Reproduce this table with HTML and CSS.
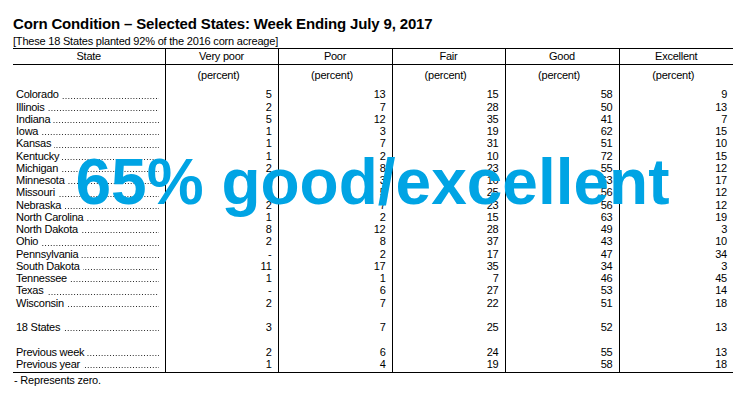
FILE: index.html
```html
<!DOCTYPE html>
<html lang="en">
<head>
<meta charset="utf-8">
<title>Corn Condition – Selected States</title>
<link rel="stylesheet" href="styles.css">
</head>
<body>
<div class="page">
  <h1 class="title">Corn Condition – Selected States: Week Ending July 9, 2017</h1>
  <p class="subtitle">[These 18 States planted 92% of the 2016 corn acreage]</p>
  <table class="cond">
    <colgroup>
      <col class="c-state"><col class="c-num"><col class="c-num2"><col class="c-num"><col class="c-num2"><col class="c-num2">
    </colgroup>
    <thead>
      <tr><th>State</th><th>Very poor</th><th>Poor</th><th>Fair</th><th>Good</th><th>Excellent</th></tr>
    </thead>
    <tbody>
      <tr class="unit"><td></td><td>(percent)</td><td>(percent)</td><td>(percent)</td><td>(percent)</td><td>(percent)</td></tr>
      <tr class="gap"><td></td><td></td><td></td><td></td><td></td><td></td></tr>
      <tr><td><div class="st"><span>Colorado</span><i class="dots"></i></div></td><td>5</td><td>13</td><td>15</td><td>58</td><td>9</td></tr>
      <tr><td><div class="st"><span>Illinois</span><i class="dots"></i></div></td><td>2</td><td>7</td><td>28</td><td>50</td><td>13</td></tr>
      <tr><td><div class="st"><span>Indiana</span><i class="dots"></i></div></td><td>5</td><td>12</td><td>35</td><td>41</td><td>7</td></tr>
      <tr><td><div class="st"><span>Iowa</span><i class="dots"></i></div></td><td>1</td><td>3</td><td>19</td><td>62</td><td>15</td></tr>
      <tr><td><div class="st"><span>Kansas</span><i class="dots"></i></div></td><td>1</td><td>7</td><td>31</td><td>51</td><td>10</td></tr>
      <tr><td><div class="st"><span>Kentucky</span><i class="dots"></i></div></td><td>1</td><td>2</td><td>10</td><td>72</td><td>15</td></tr>
      <tr><td><div class="st"><span>Michigan</span><i class="dots"></i></div></td><td>2</td><td>8</td><td>23</td><td>55</td><td>12</td></tr>
      <tr><td><div class="st"><span>Minnesota</span><i class="dots"></i></div></td><td>1</td><td>3</td><td>16</td><td>63</td><td>17</td></tr>
      <tr><td><div class="st"><span>Missouri</span><i class="dots"></i></div></td><td>2</td><td>5</td><td>25</td><td>56</td><td>12</td></tr>
      <tr><td><div class="st"><span>Nebraska</span><i class="dots"></i></div></td><td>2</td><td>7</td><td>23</td><td>56</td><td>12</td></tr>
      <tr><td><div class="st"><span>North Carolina</span><i class="dots"></i></div></td><td>1</td><td>2</td><td>15</td><td>63</td><td>19</td></tr>
      <tr><td><div class="st"><span>North Dakota</span><i class="dots"></i></div></td><td>8</td><td>12</td><td>28</td><td>49</td><td>3</td></tr>
      <tr><td><div class="st"><span>Ohio</span><i class="dots"></i></div></td><td>2</td><td>8</td><td>37</td><td>43</td><td>10</td></tr>
      <tr><td><div class="st"><span>Pennsylvania</span><i class="dots"></i></div></td><td>-</td><td>2</td><td>17</td><td>47</td><td>34</td></tr>
      <tr><td><div class="st"><span>South Dakota</span><i class="dots"></i></div></td><td>11</td><td>17</td><td>35</td><td>34</td><td>3</td></tr>
      <tr><td><div class="st"><span>Tennessee</span><i class="dots"></i></div></td><td>1</td><td>1</td><td>7</td><td>46</td><td>45</td></tr>
      <tr><td><div class="st"><span>Texas</span><i class="dots"></i></div></td><td>-</td><td>6</td><td>27</td><td>53</td><td>14</td></tr>
      <tr><td><div class="st"><span>Wisconsin</span><i class="dots"></i></div></td><td>2</td><td>7</td><td>22</td><td>51</td><td>18</td></tr>
      <tr class="blank"><td></td><td></td><td></td><td></td><td></td><td></td></tr>
      <tr><td><div class="st"><span>18 States</span><i class="dots"></i></div></td><td>3</td><td>7</td><td>25</td><td>52</td><td>13</td></tr>
      <tr class="blank"><td></td><td></td><td></td><td></td><td></td><td></td></tr>
      <tr><td><div class="st"><span>Previous week</span><i class="dots"></i></div></td><td>2</td><td>6</td><td>24</td><td>55</td><td>13</td></tr>
      <tr><td><div class="st"><span>Previous year</span><i class="dots"></i></div></td><td>1</td><td>4</td><td>19</td><td>58</td><td>18</td></tr>
      <tr class="end"><td></td><td></td><td></td><td></td><td></td><td></td></tr>
    </tbody>
  </table>
  <p class="note">- Represents zero.</p>
  <div class="overlay">65% good/excellent</div>
</div>
</body>
</html>
```
FILE: styles.css
```css
* { box-sizing: border-box; }

body {
  margin: 0;
  background: #fff;
  color: #000;
  font-family: "Liberation Sans", Arial, sans-serif;
}

.page {
  position: relative;
  width: 754px;
  height: 406px;
  padding: 15px 0 0 13px;
  overflow: hidden;
}

.title {
  margin: 0;
  font-size: 15px;
  line-height: 18px;
  font-weight: bold;
  letter-spacing: -0.15px;
}

.subtitle {
  margin: 2px 0 0;
  font-size: 11px;
  line-height: 12px;
  letter-spacing: -0.2px;
}

.cond {
  margin-top: 1px;
  width: 720px;
  table-layout: fixed;
  border-collapse: collapse;
  border-top: 1px solid #000;
  border-bottom: 1px solid #000;
  font-size: 11px;
  letter-spacing: -0.25px;
}

.c-state { width: 152px; }
.c-num { width: 113px; }
.c-num2 { width: 114px; }

.cond th {
  height: 15px;
  padding: 0;
  line-height: 15px;
  font-weight: normal;
  text-align: center;
  border-bottom: 1px solid #000;
  border-right: 1px solid #000;
}

.cond td {
  height: 12.25px;
  padding: 0 6px 0 0;
  line-height: 12.25px;
  text-align: right;
  white-space: nowrap;
  border-right: 1px solid #000;
}

.cond th:last-child,
.cond td:last-child { border-right: none; }

.cond td:first-child {
  padding: 0 6px 0 3px;
  text-align: left;
}

.cond .unit td {
  height: 16.25px;
  padding-top: 4px;
  text-align: center;
}

.cond .unit td:first-child { padding-top: 4px; }

.cond .gap td { height: 7px; line-height: 7px; }
.cond .end td { height: 2px; line-height: 2px; }

.st {
  display: flex;
  height: 12.25px;
}

.dots {
  flex: 1;
  margin-left: 3px;
  background-image: linear-gradient(to right, #222 0 1px, transparent 1px);
  background-size: 2.83px 1px;
  background-repeat: repeat-x;
  background-position: right 0 bottom 2px;
}

.note {
  margin: 1.5px 0 0 1px;
  font-size: 11px;
  line-height: 12.25px;
  letter-spacing: -0.2px;
}

.overlay {
  position: absolute;
  left: 75.5px;
  top: 149.5px;
  font-size: 64px;
  line-height: 64px;
  font-weight: bold;
  color: #00a4e4;
  white-space: nowrap;
}
```
